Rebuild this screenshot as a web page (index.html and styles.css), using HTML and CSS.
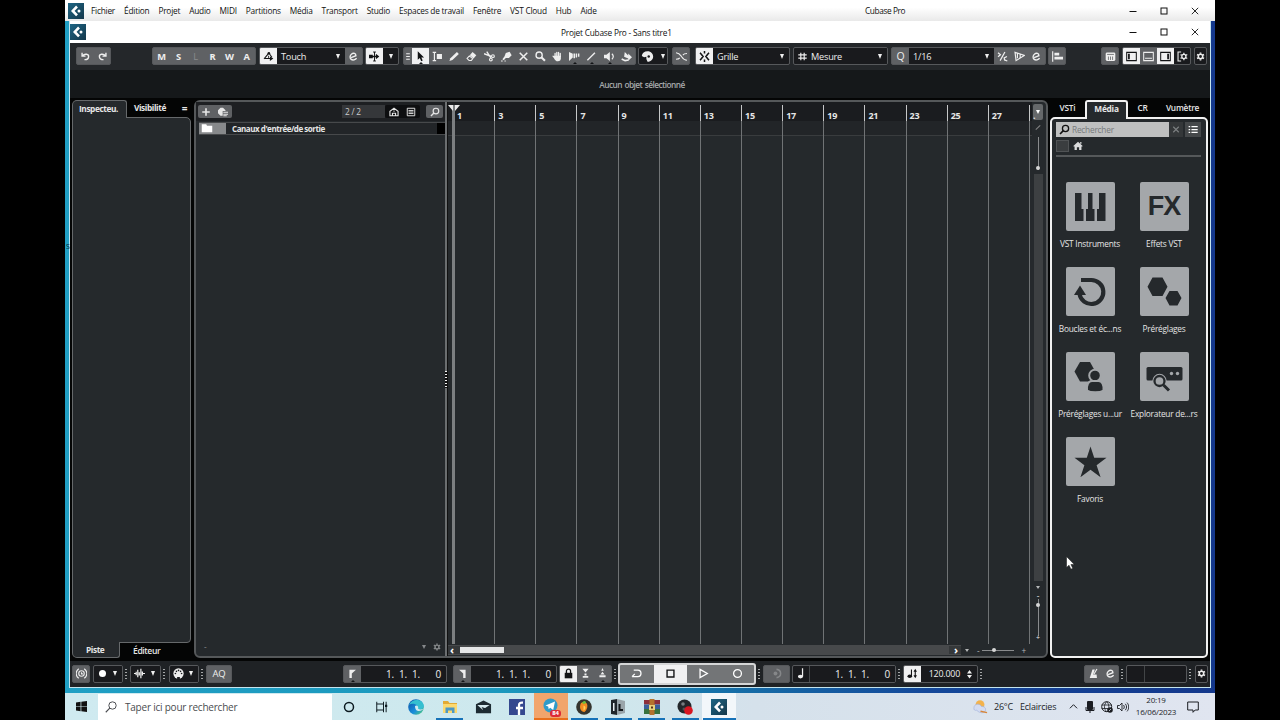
FILE: index.html
```html
<!DOCTYPE html>
<html lang="fr">

<head>
    <meta charset="UTF-8">
    <title>Cubase Pro</title>
    <link rel="stylesheet" href="styles.css">
</head>

<body>

    <!-- Icons -->
    <svg class="sprite" xmlns="http://www.w3.org/2000/svg">
        <defs>
            <linearGradient id="cube-bg" x1="0" y1="0" x2="1" y2="1">
                <stop offset="0" stop-color="#1d6584" />
                <stop offset="1" stop-color="#15384b" />
            </linearGradient>
            <linearGradient id="edge-bg" x1="0" y1="0" x2="1" y2="1">
                <stop offset="0" stop-color="#0b4fa5" />
                <stop offset=".6" stop-color="#1b8fdb" />
                <stop offset="1" stop-color="#5bd66b" />
            </linearGradient>
        </defs>
        <symbol id="i-cubase" viewBox="0 0 16 16">
            <rect width="16" height="16" fill="url(#cube-bg)" />
            <path d="M9 3.500 4.800 7.900 9 12.300" fill="none" stroke="#fff" stroke-width="2.600" />
            <circle cx="11" cy="8" r="1.500" fill="#fff" />
        </symbol>
        <symbol id="i-min" viewBox="0 0 10 10"><path d="M1.500 5.500h7" stroke="currentColor" stroke-width="1" /></symbol>
        <symbol id="i-max" viewBox="0 0 10 10"><rect x="2" y="2" width="6" height="6" fill="none" stroke="currentColor" /></symbol>
        <symbol id="i-close" viewBox="0 0 10 10"><path d="M1.800 1.800l6.400 6.400M8.200 1.800 1.800 8.200" stroke="currentColor" stroke-width=".9" /></symbol>
        <symbol id="i-undo" viewBox="0 0 16 16"><path d="M3 2.500v5h5M3.500 7.200C7 3 13 4.500 12.500 8.500 12.200 11.500 9.500 12.800 6.500 12.500" fill="none" stroke="currentColor" stroke-width="2" /></symbol>
        <symbol id="i-redo" viewBox="0 0 16 16"><path d="M13 2.500v5H8M12.500 7.200C9 3 3 4.500 3.500 8.500 3.800 11.500 6.500 12.800 9.500 12.500" fill="none" stroke="currentColor" stroke-width="2" /></symbol>
        <symbol id="i-auto" viewBox="0 0 16 16"><path d="M1.500 11.500 8.500 3M8.500 3l4.500 6M3 11h8" fill="none" stroke="currentColor" stroke-width="1.500" /><circle cx="8.500" cy="3.200" r="1.900" fill="currentColor" /><path d="M10 7.500l5 3.500-5 3.500z" fill="currentColor" /><path d="M8 7v3" stroke="currentColor" stroke-width="1.200" /></symbol>
        <symbol id="i-e" viewBox="0 0 16 16"><path d="M4.500 9.500 11.500 6.800C11.500 3.500 8 2.300 5.300 4.300 2.500 6.500 2.300 10.500 4.600 12.200 7 14 11 12.800 12.500 10.500" fill="none" stroke="currentColor" stroke-width="2" /></symbol>
        <symbol id="i-autoscroll" viewBox="0 0 16 16"><path d="M8 1.500v13M6 1.500h4M6 14.500h4" stroke="currentColor" stroke-width="1.400" /><path d="M0 5.500h5.500v5H0zM10 4l5 4-5 4z" fill="currentColor" /><path d="M3 8h9" stroke="currentColor" stroke-width="2" /></symbol>
        <symbol id="i-handle" viewBox="0 0 6 12"><path d="M1 3h4M1 6h4M1 9h4" stroke="currentColor" stroke-width="1.300" /></symbol>
        <symbol id="i-arrow" viewBox="0 0 16 16"><path d="M4 .5v12.300l3-2.700 2 4.700 2.200-1-2-4.500h4z" fill="currentColor" /></symbol>
        <symbol id="i-range" viewBox="0 0 16 16"><path d="M1 2h5M3.500 2v12M1 14h5" fill="none" stroke="currentColor" stroke-width="1.700" /><path d="M7 4.500h7.500v7H7z" fill="currentColor" /></symbol>
        <symbol id="i-pencil" viewBox="0 0 16 16"><path d="M.5 14.500l1.500-4L11.500 1.500l2.800 2.800-9.300 8.700z" fill="currentColor" /></symbol>
        <symbol id="i-eraser" viewBox="0 0 16 16"><path d="M9.500 1.500l5.500 4.500-4 4.800-5.500-4.500z" fill="currentColor" /><path d="M4.800 7.200l5 4-2 2.500H4.500L1.500 11z" fill="none" stroke="currentColor" stroke-width="1.500" /></symbol>
        <symbol id="i-cut" viewBox="0 0 16 16"><path d="M0 4l11 4M4 1l6 9" stroke="currentColor" stroke-width="2" /><circle cx="13" cy="7.500" r="2" fill="none" stroke="currentColor" stroke-width="1.700" /><circle cx="10" cy="12.500" r="2" fill="none" stroke="currentColor" stroke-width="1.700" /></symbol>
        <symbol id="i-glue" viewBox="0 0 16 16"><path d="M7 3l5.500-2L15.500 6 11.500 10H7l-3 3.500-2-1.500L5 8z" fill="currentColor" /><path d="M0 14.500h2.500M5 14.500h2" stroke="currentColor" stroke-width="1.500" /></symbol>
        <symbol id="i-x" viewBox="0 0 16 16"><path d="M2.500 2.500l11 11M13.500 2.500l-11 11" stroke="currentColor" stroke-width="2.200" /></symbol>
        <symbol id="i-zoom" viewBox="0 0 16 16"><circle cx="6" cy="6" r="4.500" fill="none" stroke="currentColor" stroke-width="2" /><path d="M9.200 9l5.300 5.300" stroke="currentColor" stroke-width="3" /></symbol>
        <symbol id="i-hand" viewBox="0 0 16 16"><path d="M4.500 8V3.500M7 7.500V2M9.500 7.500V2M12 8V3.500M3.500 9.500 1.500 7.500" stroke="currentColor" stroke-width="1.900" stroke-linecap="round" /><path d="M3.500 7h9.400v3.500c0 2.500-1.500 4.500-4.400 4.500-2.500 0-4-1.500-6-5.300z" fill="currentColor" /></symbol>
        <symbol id="i-comp" viewBox="0 0 16 16"><path d="M0 1.500l5.500 2.500v5.500l-5.500 5zM6.500 3.500h2.200v7H6.500zM9.700 3.500h2v6h-2zM12.900 3.500h2.200v5h-2.200z" fill="currentColor" /></symbol>
        <symbol id="i-line" viewBox="0 0 16 16"><path d="M2 13.500 13 2.500" stroke="currentColor" stroke-width="2" /></symbol>
        <symbol id="i-speaker" viewBox="0 0 16 16"><path d="M0 5.500h3.500L8.500 1.500v13l-5-4H0z" fill="currentColor" /><path d="M11.500 4c2.500 2.500 2.500 5.500 0 8" fill="none" stroke="currentColor" stroke-width="1.700" /></symbol>
        <symbol id="i-colour" viewBox="0 0 16 16"><path d="M5.500 1.500l5 5V3.500L16 9l-5.500 5v-3L4.500 8.500z" fill="currentColor" /><path d="M1 11.500l5 2.500 5-1" fill="none" stroke="currentColor" stroke-width="2.400" /></symbol>
        <symbol id="i-palette" viewBox="0 0 16 16"><path d="M8 1.500A7 6.500 0 0 0 1 7.500l2.800 1.500 2.800-.8v3L8 14.500C17.500 14 17 1.500 8 1.500z" fill="currentColor" /><circle cx="9.500" cy="8" r="1.500" fill="#191a1d" /></symbol>
        <symbol id="i-fade" viewBox="0 0 16 16"><path d="M0 2.500C5 3 6 5 8 8s3.500 5.500 8 5.500M10 6c1-1.500 2-2.200 6-2.300M0 12c3 0 4.500-.5 5.500-2" fill="none" stroke="currentColor" stroke-width="1.600" /></symbol>
        <symbol id="i-snap" viewBox="0 0 16 16"><path d="M8 0v3.500M8 12.500V16M1.500 2.500 6 8l-4.500 5.500M14.500 2.500 10 8l4.500 5.500" fill="none" stroke="currentColor" stroke-width="2.200" /></symbol>
        <symbol id="i-hash" viewBox="0 0 16 16"><path d="M5 1.500v13M11 1.500v13M.5 5h15M.5 11h15" stroke="currentColor" stroke-width="2.100" /></symbol>
        <symbol id="i-iq" viewBox="0 0 16 16"><path d="M1.500 2.500l3.500 3L1.500 8.500M4.500 14l7-12.500M14.500 8l-4 2 .5 3 4 1.500" fill="none" stroke="currentColor" stroke-width="1.800" /></symbol>
        <symbol id="i-swing" viewBox="0 0 16 16"><path d="M1.500 2l13.500 4.500L3 14zM5 3.500v7M9 5v5" fill="none" stroke="currentColor" stroke-width="1.700" /></symbol>
        <symbol id="i-align" viewBox="0 0 16 16"><path d="M1 .5v15" stroke="currentColor" stroke-width="1.700" /><path d="M3.500 2.500h7v4h-7zM3.500 8.500H16V12.500H3.500z" fill="currentColor" /></symbol>
        <symbol id="i-keys" viewBox="0 0 16 16"><rect x="1" y="2" width="14" height="12.500" rx="2" fill="currentColor" /><path d="M3 5h10M5 8v5M8 8v5M11 8v5" stroke="#66686b" stroke-width="1.200" /></symbol>
        <symbol id="i-zone-l" viewBox="0 0 16 16"><path d="M1 2h14v12H1z" fill="none" stroke="currentColor" stroke-width="1.500" /><path d="M3 4h2.500v8H3z" fill="currentColor" /></symbol>
        <symbol id="i-zone-b" viewBox="0 0 16 16"><path d="M1 2h14v12H1zM3 10.500h10" fill="none" stroke="currentColor" stroke-width="1.500" /></symbol>
        <symbol id="i-zone-r" viewBox="0 0 16 16"><path d="M1 2h14v12H1z" fill="none" stroke="currentColor" stroke-width="1.500" /><path d="M10.500 4H13v8h-2.500z" fill="currentColor" /></symbol>
        <symbol id="i-gear" viewBox="0 0 16 16"><circle cx="8" cy="8" r="3.900" fill="none" stroke="currentColor" stroke-width="2.700" /><path d="M8 .8v2.500M8 12.700v2.500M1.800 4.400l2 1.200M12.200 10.400l2 1.200M1.800 11.600l2-1.200M12.200 5.600l2-1.200" stroke="currentColor" stroke-width="2.900" /></symbol>
        <symbol id="i-setup" viewBox="0 0 16 16"><path d="M6 1.500H1.500v13H6" fill="none" stroke="currentColor" stroke-width="1.600" /><circle cx="10" cy="8" r="3" fill="none" stroke="currentColor" stroke-width="1.900" /><path d="M10 2.500v2M10 11.500v2M5.200 5.300l1.700 1M13.200 9.800l1.700 1M5.200 10.700l1.700-1M13.200 6.200l1.700-1" stroke="currentColor" stroke-width="1.800" /></symbol>
        <symbol id="i-plus" viewBox="0 0 16 16"><path d="M8 2v12M2 8h12" stroke="currentColor" stroke-width="2.600" /></symbol>
        <symbol id="i-preset" viewBox="0 0 16 16"><path d="M0 10V5l4-4h4l4 4v1.500H7.500V14H4z" fill="currentColor" /><path d="M8.500 8.500H16M8.500 11.500H16M8.500 14H14" stroke="currentColor" stroke-width="1.700" /></symbol>
        <symbol id="i-house" viewBox="0 0 16 16"><path d="M1.500 14V7L8 2l6.500 5v7zM5.500 14v-4h5v4M8 5.500v2" fill="none" stroke="currentColor" stroke-width="1.800" /></symbol>
        <symbol id="i-rows" viewBox="0 0 16 16"><path d="M2 2h12v12H2zM4 5.500h8M4 8h8M4 10.500h8" fill="none" stroke="currentColor" stroke-width="1.500" /></symbol>
        <symbol id="i-find" viewBox="0 0 16 16"><circle cx="9.500" cy="6.500" r="4.500" fill="none" stroke="currentColor" stroke-width="1.900" /><path d="M6.300 9.700 1.500 14.500" stroke="currentColor" stroke-width="2.400" /></symbol>
        <symbol id="i-wfind" viewBox="0 0 16 16"><circle cx="10" cy="6" r="4.900" fill="none" stroke="currentColor" stroke-width="1.300" /><path d="M6.700 9.300 1 15" stroke="currentColor" stroke-width="1.500" /></symbol>
        <symbol id="i-folder" viewBox="0 0 16 12"><path d="M1 1h6l1 2h7v8.500H1z" fill="currentColor" /></symbol>
        <symbol id="i-home" viewBox="0 0 16 16"><path d="M8 1l7.500 7-1.200 1.200L13.500 8.500V14.500H9.800V10H6.200v4.500H2.500V8.500L1.700 9.200.5 8zM11.500 1.500h2v3h-2z" fill="currentColor" /></symbol>
        <symbol id="i-list" viewBox="0 0 16 16"><path d="M1 3.500h2.500M1 8h2.500M1 12.500h2.500M5.500 3.500H15.500M5.500 8H15.500M5.500 12.500H15.500" stroke="currentColor" stroke-width="2" /></symbol>
        <symbol id="i-connect" viewBox="0 0 16 16"><circle cx="8" cy="8" r="4" fill="none" stroke="currentColor" stroke-width="1.600" /><path d="M8 6v2.500h2M4 1C-1 4.500-1 11.500 4 15M12 1c5 3.500 5 10.500 0 14" fill="none" stroke="currentColor" stroke-width="1.600" /></symbol>
        <symbol id="i-wave" viewBox="0 0 16 16"><path d="M0 8h2.500M3.200 5.500v5M5.500 2.500v11M7.700 6v5M10 1v14M12.200 5v6M13 8h3" stroke="currentColor" stroke-width="1.800" /></symbol>
        <symbol id="i-midi" viewBox="0 0 16 16"><circle cx="8" cy="8" r="7.500" fill="currentColor" /><g fill="#191a1d"><circle cx="3.500" cy="8" r="1.200" /><circle cx="5" cy="4.800" r="1.200" /><circle cx="8" cy="3.500" r="1.200" /><circle cx="11" cy="4.800" r="1.200" /><circle cx="12.500" cy="8" r="1.200" /><path d="M6 13h4v3H6z" /></g></symbol>
        <symbol id="i-loc-l" viewBox="0 0 16 16"><path d="M3.500 2.500h9.500L7 8v6.500H3.500z" fill="currentColor" /></symbol>
        <symbol id="i-loc-r" viewBox="0 0 16 16"><path d="M12.500 2.500H3L9 8v6.500h3.500z" fill="currentColor" /></symbol>
        <symbol id="i-lock" viewBox="0 0 16 16"><rect x="2.500" y="7" width="11" height="8" fill="currentColor" /><path d="M5 8V4.500a3 3 0 0 1 6 0V8" fill="none" stroke="currentColor" stroke-width="1.900" /></symbol>
        <symbol id="i-punch-in" viewBox="0 0 16 16"><path d="M3.500 1h9L8 6.500zM6.500 8h3v3h-3zM4 11.500h8v2.500H4z" fill="currentColor" /></symbol>
        <symbol id="i-punch-out" viewBox="0 0 16 16"><path d="M8 0l1.800 4H6.200zM8 5.500l3 4H5zM3.500 10.500h9v3h-9z" fill="currentColor" /></symbol>
        <symbol id="i-cycle" viewBox="0 0 16 16"><path d="M4 3h6c6 0 6 9.500 0 9.500H1.500M5.500 8.500 1.500 12.500" fill="none" stroke="currentColor" stroke-width="1.900" /></symbol>
        <symbol id="i-stop" viewBox="0 0 16 16"><path d="M3 3h10v10H3z" fill="none" stroke="currentColor" stroke-width="2" /></symbol>
        <symbol id="i-play" viewBox="0 0 16 16"><path d="M3 2 13.500 8 3 14z" fill="none" stroke="currentColor" stroke-width="1.900" /></symbol>
        <symbol id="i-rec" viewBox="0 0 16 16"><circle cx="8" cy="8" r="5.700" fill="none" stroke="currentColor" stroke-width="1.900" /></symbol>
        <symbol id="i-pre" viewBox="0 0 16 16"><circle cx="6.500" cy="8" r="2.800" fill="currentColor" /><path d="M8 2c8 1 8 11 0 12" fill="none" stroke="currentColor" stroke-width="2.200" /></symbol>
        <symbol id="i-note" viewBox="0 0 16 16"><ellipse cx="6.500" cy="12.500" rx="3.800" ry="2.600" fill="currentColor" /><path d="M9.500 12.500V.5" stroke="currentColor" stroke-width="1.800" /></symbol>
        <symbol id="i-tempo" viewBox="0 0 16 16"><ellipse cx="4" cy="12" rx="3.300" ry="2.500" fill="currentColor" /><path d="M6.500 12V2M12 3v10" stroke="currentColor" stroke-width="1.600" /><path d="M9.500 5.500l2.500-4.500 2.500 4.500zM9.500 10.500l2.500 4.500 2.500-4.500z" fill="currentColor" /></symbol>
        <symbol id="i-metro" viewBox="0 0 16 16"><path d="M6.500 2h3.500L7.500 9.500h5l.5 5H2.500z" fill="currentColor" /><path d="M8.500 9l4.500-7.500" stroke="currentColor" stroke-width="1.700" /></symbol>
        <symbol id="i-spin" viewBox="0 0 8 16"><path d="M0 7l4-5.500L8 7zM0 9.500h8L4 15z" fill="currentColor" /></symbol>

        <!-- Media rack tiles -->
        <symbol id="t-inst" viewBox="0 0 48 48"><path d="M9 10h6.500v16h2v12H9zM22 10h4.500v16H28.500v12h-8.500V26h2zM33 10h6.500v28H31V26h2z" fill="currentColor" /></symbol>
        <symbol id="t-loop" viewBox="0 0 48 48"><path d="M15 12h10a12 12 0 1 1-11.500 14" fill="none" stroke="currentColor" stroke-width="4.200" /><path d="M8 27 14 17.500l6 9.500z" fill="currentColor" /></symbol>
        <symbol id="t-preset" viewBox="0 0 48 48"><path d="M12.500 9.500h10l5 9.200-5 9.300h-10l-5-9.300zM29.500 23h8l4 7-4 7.500h-8l-4-7.500z" fill="currentColor" /></symbol>
        <symbol id="t-user" viewBox="0 0 48 48"><path d="M14 9h10l5 9-5 10.500H14L8.500 18.500z" fill="currentColor" /><g fill="currentColor" stroke="#a4a7aa" stroke-width="2"><circle cx="29" cy="22.500" r="5.800" /><path d="M21 37.500c-.5-6 1.500-9.500 5-9.500h6.500c3.500 0 5.500 3.500 5 9.500-3.500 2.300-13 2.300-16.500 0z" /></g></symbol>
        <symbol id="t-explore" viewBox="0 0 48 48"><rect x="6.500" y="14" width="36" height="13.500" rx="1.500" fill="currentColor" /><circle cx="31.500" cy="20.500" r="1.700" fill="#a4a7aa" /><circle cx="37.500" cy="20.500" r="1.700" fill="#a4a7aa" /><circle cx="19.500" cy="28" r="7.200" fill="#a4a7aa" /><circle cx="19.500" cy="28" r="5" fill="none" stroke="currentColor" stroke-width="2.300" /><path d="M23.500 32l5.500 5.500" stroke="currentColor" stroke-width="3" /></symbol>
        <symbol id="t-star" viewBox="0 0 48 48"><path d="M24.500 8.500l3.700 11.200H40.500l-9.900 7.500 4 12-10.100-7.400-10.100 7.400 4-12-9.900-7.500h12.300z" fill="currentColor" /></symbol>

        <!-- Windows taskbar -->
        <symbol id="w-start" viewBox="0 0 12 12"><path d="M0 1.600 5 .9v4.700H0zM5.800.8 12 0v5.600H5.800zM0 6.400h5v4.700l-5-.7zM5.800 6.400H12V12l-6.200-.9z" fill="#111" /></symbol>
        <symbol id="w-cortana" viewBox="0 0 16 16"><circle cx="8" cy="8" r="6" fill="none" stroke="#0c1a20" stroke-width="2" /></symbol>
        <symbol id="w-tasks" viewBox="0 0 16 16"><path d="M1 1v3h9V1M1 15v-3h9v3M1 4v8M10 4v8M13.500 1v14" fill="none" stroke="#0c1a20" stroke-width="1.300" /><path d="M12 5h3v3h-3z" fill="#0c1a20" /></symbol>
        <symbol id="w-edge" viewBox="0 0 16 16"><circle cx="8" cy="8" r="7.800" fill="url(#edge-bg)" /><path d="M1 6C4-1 15-.5 15.800 7c0 3-4 4-6 2.500C11 6 5 3 1 6z" fill="#35bfd0" /><path d="M7 7c2-1.500 4 .5 3 2.500 1.500 1.500 4 1.300 5.500 0C14 12.500 7 14 7 7z" fill="#d2eaf0" /></symbol>
        <symbol id="w-files" viewBox="0 0 16 16"><path d="M1 2h5l1.500 2H15v3H1z" fill="#e2aa34" /><path d="M1 5h14v9H1z" fill="#fbd970" /><path d="M3.500 8.500h9V14H10v-2.500H6V14H3.500z" fill="#4b98c5" /></symbol>
        <symbol id="w-mail" viewBox="0 0 18 16"><path d="M1 5l8-4 8 4v9.500H1z" fill="#1d2b32" /><path d="M2.500 6h13L8 11z" fill="#d5e9ee" /><path d="M7 8l2 4 3-2.500" fill="#1d2b32" /></symbol>
        <symbol id="w-fb" viewBox="0 0 16 16"><rect width="16" height="16" fill="#34488f" /><path d="M10 16V6.500C10 4 11 3.500 14 3.700M7 9h7" fill="none" stroke="#fff" stroke-width="2.300" /></symbol>
        <symbol id="w-tg" viewBox="0 0 16 16"><circle cx="7.500" cy="7.500" r="7" fill="#2f9bc9" /><path d="M2.500 7.500 12 3.500l-1.800 8.500-3-2.200-1.500 1.500-.5-2.800z" fill="#fff" /></symbol>
        <symbol id="w-fl" viewBox="0 0 16 16"><circle cx="8" cy="8" r="7.800" fill="#35352f" /><path d="M5 4C11 0 14 8 8.500 13 4 12.500 3 8 5 4z" fill="#f38d22" /><path d="M6 4c2-3 4-2 4 0L8 5z" fill="#6abf3b" /><path d="M7.500 6.500c3 1 2 4 0 5z" fill="#ffd35b" /></symbol>
        <symbol id="w-live" viewBox="0 0 16 16"><path d="M1 1l6-1v16l-6-1z" fill="#20262a" /><path d="M3 4h1.500v8H3z" fill="#e8eef0" /><path d="M7 0l8 2v12l-8 2z" fill="#9aa5aa" /><path d="M9.500 5v6H13" fill="none" stroke="#121619" stroke-width="2" /></symbol>
        <symbol id="w-rar" viewBox="0 0 16 16"><path d="M0 1h16v4.500H0z" fill="#8d2f3b" /><path d="M0 5.500h16V10H0z" fill="#3a5f9a" /><path d="M0 10h16v5H0z" fill="#38733f" /><path d="M5.500 0h5v16h-5z" fill="#b5722d" /><path d="M5 6h6v5H5z" fill="#e8d27c" /><path d="M7 7.500h2v2H7z" fill="#5a3218" /></symbol>
        <symbol id="w-obs" viewBox="0 0 16 16"><circle cx="7.500" cy="7.500" r="7" fill="#23272b" /><circle cx="6" cy="5" r="1.800" fill="#777c80" /><circle cx="7" cy="10" r="1.500" fill="#4c5256" /><circle cx="11.500" cy="11.500" r="4.300" fill="#d81621" /></symbol>
        <symbol id="w-weather" viewBox="0 0 18 16"><circle cx="8.500" cy="6" r="4.700" fill="#f3b24c" /><path d="M2 9.500C2 5 8 4 10 8c5-.5 6 5 2 6.500-3 .5-5-.5-7-2.500C3 12.500 1.500 11.500 2 9.500z" fill="#d3dcf2" stroke="#a3b3dc" stroke-width=".7" /><path d="M9 13l7 1.500" stroke="#d78638" stroke-width="1.500" /></symbol>
        <symbol id="w-up" viewBox="0 0 10 10"><path d="M1 7l4-4 4 4" fill="none" stroke="#1b1d22" stroke-width="1.100" /></symbol>
        <symbol id="w-mic" viewBox="0 0 10 12"><rect x="2" y="0" width="6" height="9" rx="1" fill="#1b1d22" /><path d="M1 6v3.500h8V6M5 9v3" fill="none" stroke="#1b1d22" /></symbol>
        <symbol id="w-globe" viewBox="0 0 12 12"><circle cx="5.700" cy="5.700" r="5" fill="none" stroke="#1b1d22" /><path d="M.7 4h10M.7 7.500h7M5.700.7c-3 3-3 7 0 10M5.700.7c2 2 2.400 4 2 6" fill="none" stroke="#1b1d22" stroke-width=".8" /><circle cx="9" cy="9" r="2.800" fill="#1b1d22" /><path d="M8 10l2-2" stroke="#dce2ec" stroke-width=".8" /></symbol>
        <symbol id="w-vol" viewBox="0 0 12 12"><path d="M.5 4.500h2l2.500-2.500v8L2.500 7.500h-2zM6.500 4c1 1.300 1 2.700 0 4M8.300 2.800c1.700 2 1.700 4.400 0 6.400M10 1.600c2.300 2.600 2.300 6.200 0 8.800" fill="none" stroke="#1b1d22" stroke-width=".9" /></symbol>
        <symbol id="w-note" viewBox="0 0 12 12"><path d="M.7 1h10.600v8H8.200L6 11.300V9H.7z" fill="none" stroke="#1b1d22" /></symbol>
    </svg>

    <div class="desktop">

        <header class="app-bar">
            <svg class="logo"><use href="#i-cubase" /></svg>
            <nav class="menu">
                <span>Fichier</span><span>Édition</span><span>Projet</span><span>Audio</span><span>MIDI</span><span>Partitions</span><span>Média</span><span>Transport</span><span>Studio</span><span>Espaces de travail</span><span>Fenêtre</span><span>VST Cloud</span><span>Hub</span><span>Aide</span>
            </nav>
            <span class="app-name">Cubase Pro</span>
            <div class="win-btns"><svg><use href="#i-min" /></svg><svg><use href="#i-max" /></svg><svg><use href="#i-close" /></svg></div>
        </header>

        <div class="edge-letter">S</div>

        <main class="window">
            <div class="title-bar">
                <svg class="logo"><use href="#i-cubase" /></svg>
                <span class="title">Projet Cubase Pro - Sans titre1</span>
                <div class="win-btns"><svg><use href="#i-min" /></svg><svg><use href="#i-max" /></svg><svg><use href="#i-close" /></svg></div>
            </div>

            <!-- Toolbar -->
            <div class="toolbar">
                <div class="group g-undo"><i><svg><use href="#i-undo" /></svg></i><i><svg><use href="#i-redo" /></svg></i></div>
                <div class="group g-states"><b>M</b><b>S</b><b class="off">L</b><b>R</b><b>W</b><b>A</b></div>
                <div class="group g-touch"><i class="on"><svg><use href="#i-auto" /></svg></i><span class="drop">Touch</span><i><svg><use href="#i-e" /></svg></i></div>
                <div class="group g-scroll"><i class="on"><svg><use href="#i-autoscroll" /></svg></i><span class="drop"></span></div>
                <div class="group g-tools">
                    <i class="handle"><svg><use href="#i-handle" /></svg></i>
                    <i class="on more"><svg><use href="#i-arrow" /></svg></i>
                    <i><svg><use href="#i-range" /></svg></i>
                    <i><svg><use href="#i-pencil" /></svg></i>
                    <i><svg><use href="#i-eraser" /></svg></i>
                    <i><svg><use href="#i-cut" /></svg></i>
                    <i><svg><use href="#i-glue" /></svg></i>
                    <i><svg><use href="#i-x" /></svg></i>
                    <i><svg><use href="#i-zoom" /></svg></i>
                    <i><svg><use href="#i-hand" /></svg></i>
                    <i class="more"><svg><use href="#i-comp" /></svg></i>
                    <i class="more"><svg><use href="#i-line" /></svg></i>
                    <i class="more"><svg><use href="#i-speaker" /></svg></i>
                    <i><svg><use href="#i-colour" /></svg></i>
                </div>
                <div class="group dark g-palette"><i><svg><use href="#i-palette" /></svg></i><span class="drop"></span></div>
                <div class="group g-fade"><i><svg><use href="#i-fade" /></svg></i></div>
                <div class="group g-snap"><i class="on"><svg><use href="#i-snap" /></svg></i><span class="drop">Grille</span></div>
                <div class="group dark g-grid"><i><svg><use href="#i-hash" /></svg></i><span class="drop">Mesure</span></div>
                <div class="group g-quant"><i class="letter">Q</i><span class="drop">1/16</span><i><svg><use href="#i-iq" /></svg></i><i><svg><use href="#i-swing" /></svg></i><i><svg><use href="#i-e" /></svg></i></div>
                <div class="group g-align"><i><svg><use href="#i-align" /></svg></i></div>
                <div class="group g-keys"><i><svg><use href="#i-keys" /></svg></i></div>
                <div class="group g-zones"><i class="on"><svg><use href="#i-zone-l" /></svg></i><i><svg><use href="#i-zone-b" /></svg></i><i class="on"><svg><use href="#i-zone-r" /></svg></i><i class="black"><svg><use href="#i-setup" /></svg></i></div>
                <div class="group dark g-gear"><i><svg><use href="#i-gear" /></svg></i></div>
            </div>

            <div class="info-line">Aucun objet sélectionné</div>

            <!-- Zones -->
            <div class="zones">
                <aside class="inspector">
                    <div class="tabs"><span class="tab active">Inspecteu.</span><span class="tab vis">Visibilité</span><span class="eq">=</span></div>
                    <div class="pane"></div>
                    <div class="tabs bottom"><span class="tab active">Piste</span><span class="tab editor">Éditeur</span></div>
                </aside>

                <section class="project">
                    <div class="track-list">
                        <div class="track-head">
                            <div class="add"><svg><use href="#i-plus" /></svg><svg><use href="#i-preset" /></svg></div>
                            <span class="count">2 / 2</span>
                            <div class="views"><svg><use href="#i-house" /></svg><svg><use href="#i-rows" /></svg></div>
                            <div class="find"><svg><use href="#i-find" /></svg></div>
                        </div>
                        <div class="track">
                            <span class="track-icon"><svg><use href="#i-folder" /></svg></span>
                            <span class="track-name">Canaux d'entrée/de sortie</span>
                            <span class="track-end"></span>
                        </div>
                        <div class="track-foot"><span class="dash">-</span><span class="tri"></span><svg><use href="#i-gear" /></svg></div>
                    </div>

                    <div class="splitter"><span></span></div>

                    <div class="timeline">
                        <div class="bars">
                            <div class="bar first"><span>1</span></div>
                            <div class="bar"><span>3</span></div>
                            <div class="bar"><span>5</span></div>
                            <div class="bar"><span>7</span></div>
                            <div class="bar"><span>9</span></div>
                            <div class="bar"><span>11</span></div>
                            <div class="bar"><span>13</span></div>
                            <div class="bar"><span>15</span></div>
                            <div class="bar"><span>17</span></div>
                            <div class="bar"><span>19</span></div>
                            <div class="bar"><span>21</span></div>
                            <div class="bar"><span>23</span></div>
                            <div class="bar"><span>25</span></div>
                            <div class="bar"><span>27</span></div>
                            <div class="bar last"><span>.</span></div>
                        </div>
                        <div class="h-scroll">
                            <div class="h-track"><span class="chev">‹</span><span class="thumb"></span><span class="chev end">›</span></div>
                            <span class="tri"></span>
                            <span class="sign">-</span>
                            <div class="h-zoom"><span></span></div>
                            <span class="sign">+</span>
                        </div>
                        <svg class="cursor-head" viewBox="0 0 12 7"><path d="M0 0h5v6zM12 0H7v6z" fill="#e9e9e9" /></svg>
                    </div>

                    <div class="v-col">
                        <span class="v-menu"></span>
                        <span class="slash"></span>
                        <div class="v-zoom top"><span></span></div>
                        <div class="v-scroll"></div>
                        <span class="tri"></span>
                        <span class="v-sign">-</span>
                        <div class="v-zoom low"><span></span></div>
                        <span class="v-sign plus">+</span>
                    </div>
                </section>

                <aside class="rack">
                    <div class="rack-tabs"><span>VSTi</span><span class="active">Média</span><span>CR</span><span>Vumètre</span></div>
                    <div class="rack-pane">
                        <div class="search">
                            <div class="field"><svg><use href="#i-find" /></svg>Rechercher</div>
                            <span class="clear"><svg><use href="#i-x" /></svg></span>
                            <span class="as-list"><svg><use href="#i-list" /></svg></span>
                        </div>
                        <div class="path"><span class="back"></span><svg><use href="#i-home" /></svg></div>
                        <div class="tiles">
                            <div class="tile"><span><svg><use href="#t-inst" /></svg></span>VST Instruments</div>
                            <div class="tile"><span class="fx">FX</span>Effets VST</div>
                            <div class="tile"><span><svg><use href="#t-loop" /></svg></span>Boucles et éc...ns</div>
                            <div class="tile"><span><svg><use href="#t-preset" /></svg></span>Préréglages</div>
                            <div class="tile"><span><svg><use href="#t-user" /></svg></span>Préréglages u...ur</div>
                            <div class="tile"><span><svg><use href="#t-explore" /></svg></span>Explorateur de...rs</div>
                            <div class="tile"><span><svg><use href="#t-star" /></svg></span>Favoris</div>
                        </div>
                    </div>
                </aside>
            </div>

            <!-- Transport -->
            <div class="transport">
                <div class="group t-connect"><i><svg><use href="#i-connect" /></svg></i></div>
                <div class="group dark t-rec"><i class="dot"></i><span class="drop"></span></div><em></em>
                <div class="group dark t-wave"><i><svg><use href="#i-wave" /></svg></i><span class="drop"></span></div><em></em>
                <div class="group dark t-midi"><i><svg><use href="#i-midi" /></svg></i><span class="drop"></span></div><em></em>
                <div class="group t-aq">AQ</div>
                <div class="group t-left"><i class="more"><svg><use href="#i-loc-l" /></svg></i><span class="pos">1. 1. 1. &nbsp; 0</span></div>
                <div class="group t-right"><i class="more"><svg><use href="#i-loc-r" /></svg></i><span class="pos">1. 1. 1. &nbsp; 0</span></div>
                <div class="group t-lock"><i class="on"><svg><use href="#i-lock" /></svg></i><i class="more"><svg><use href="#i-punch-in" /></svg></i><i class="more"><svg><use href="#i-punch-out" /></svg></i></div><em></em>
                <div class="buttons"><i><svg><use href="#i-cycle" /></svg></i><i class="on"><svg><use href="#i-stop" /></svg></i><i><svg><use href="#i-play" /></svg></i><i><svg><use href="#i-rec" /></svg></i></div><em></em>
                <div class="group t-pre"><i><svg><use href="#i-pre" /></svg></i></div>
                <div class="group dark t-time"><i><svg><use href="#i-note" /></svg></i><span class="pos">1. 1. 1. &nbsp; 0</span></div><em></em>
                <div class="group t-tempo"><i class="on"><svg><use href="#i-tempo" /></svg></i><span class="pos">120.000</span><svg class="spin"><use href="#i-spin" /></svg></div><em></em>
                <div class="group t-click"><i><svg><use href="#i-metro" /></svg></i><i><svg><use href="#i-e" /></svg></i></div><em></em>
                <div class="group dark t-meter"><span></span></div><em></em>
                <div class="group dark t-gear"><i><svg><use href="#i-gear" /></svg></i></div>
            </div>
        </main>

        <svg class="pointer" viewBox="0 0 9 14"><path d="M.5.5v11l2.500-2.300 2 4 1.800-.9-1.900-3.800h3.400z" fill="#fff" stroke="#111" stroke-width=".5" /></svg>

        <footer class="taskbar">
            <span class="start"><svg><use href="#w-start" /></svg></span>
            <div class="task-search"><svg><use href="#i-wfind" /></svg>Taper ici pour rechercher</div>
            <div class="apps">
                <span><svg class="small"><use href="#w-cortana" /></svg></span>
                <span><svg class="small"><use href="#w-tasks" /></svg></span>
                <span><svg><use href="#w-edge" /></svg></span>
                <span class="run"><svg><use href="#w-files" /></svg></span>
                <span><svg class="wide"><use href="#w-mail" /></svg></span>
                <span><svg><use href="#w-fb" /></svg></span>
                <span class="alert"><svg><use href="#w-tg" /></svg><b>84</b></span>
                <span class="run"><svg><use href="#w-fl" /></svg></span>
                <span class="run"><svg><use href="#w-live" /></svg></span>
                <span class="run"><svg><use href="#w-rar" /></svg></span>
                <span class="run"><svg><use href="#w-obs" /></svg></span>
                <span class="run current"><svg><use href="#i-cubase" /></svg></span>
            </div>
            <div class="tray">
                <svg class="weather"><use href="#w-weather" /></svg>
                <span class="temp">26°C</span><span class="sky">Eclaircies</span>
                <svg class="up"><use href="#w-up" /></svg>
                <svg class="mic"><use href="#w-mic" /></svg>
                <svg class="net"><use href="#w-globe" /></svg>
                <svg class="vol"><use href="#w-vol" /></svg>
                <div class="clock">20:19<br>16/06/2023</div>
                <svg class="notif"><use href="#w-note" /></svg>
            </div>
        </footer>
    </div>

</body>

</html>
```

FILE: styles.css
```css
* {
    box-sizing: border-box;
}

body {
    margin: 0;
    width: 1280px;
    height: 720px;
    overflow: hidden;
    background: #000;
    font-family: "Open Sans", "Noto Sans", sans-serif;
    font-size: 8.3px;
    letter-spacing: -.22px;
    color: #e6e6e6;
    white-space: nowrap;
}

svg {
    display: block;
    flex: none;
}

i,
em {
    font-style: normal;
}

.sprite {
    position: absolute;
    width: 0;
    height: 0;
}

/* Desktop */
.desktop {
    position: relative;
    display: flex;
    flex-direction: column;
    width: 1150px;
    height: 720px;
    margin-left: 65px;
    background: linear-gradient(90deg, #209fc4 0, #1b98bd 38%, #1673a9 56%, #14489a 75%, #14388c 100%);
}

.app-bar,
.title-bar {
    display: flex;
    align-items: center;
    flex: none;
    height: 21px;
    background: #fff;
    color: #111;
}

.app-bar {
    padding-left: 3px;
    background: linear-gradient(#fff 35%, #e9e9e9);
}

.logo {
    width: 16px;
    height: 16px;
}

.menu {
    display: flex;
    gap: 9px;
    width: 774px;
    padding-left: 7px;
}

.app-name {
    width: 258px;
    padding-left: 7px;
    letter-spacing: -.5px;
}

.app-name {
    letter-spacing: -.4px;
}

.win-btns {
    display: flex;
    gap: 21px;
    margin-left: auto;
    padding-right: 15px;
}

.win-btns svg {
    width: 10px;
    height: 10px;
}

.edge-letter {
    position: absolute;
    left: 1px;
    top: 242px;
    width: 4px;
    overflow: hidden;
    font-size: 7px;
    color: #06202b;
}

/* Main window */
.window {
    display: flex;
    flex-direction: column;
    width: 1142px;
    height: 667px;
    margin-left: 4px;
    border: solid #c4e4ee;
    border-width: 0 1px 1px;
    background: #040505;
}

.title-bar {
    height: 22px;
}

.title-bar .title {
    width: 1080px;
    padding-left: 475px;
}

.title-bar .win-btns {
    padding-right: 10px;
}

.toolbar,
.transport {
    display: flex;
    align-items: center;
    flex: none;
    background: #24272a;
}

.toolbar {
    height: 27px;
    padding: 0 0 1px 6px;
}

.group {
    display: flex;
    flex: none;
    height: 18px;
    overflow: hidden;
    border: 1px solid #56585b;
    border-radius: 2px;
    background: #5f6164;
    color: #eee;
}

.group.dark,
.group .drop,
.group .pos,
.group .black {
    background: #191a1d;
}

.group i {
    position: relative;
    display: flex;
    align-items: center;
    justify-content: center;
    flex: none;
    width: 17px;
}

.group i svg {
    width: 11px;
    height: 11px;
}

.group .on,
.buttons .on {
    background: #f0f0f1;
    color: #121315;
}

.group .drop {
    display: flex;
    align-items: center;
    justify-content: space-between;
    flex: 1;
    padding: 0 5px 0 4px;
    font-size: 9.200px;
}

.drop::after,
.tri {
    content: "";
    margin-left: auto;
    border: 2.500px solid transparent;
    border-top: 5px solid #eee;
    border-bottom: 0;
}

.more::after {
    content: "";
    position: absolute;
    bottom: -1px;
    left: 6px;
    border: 3px solid transparent;
    border-bottom: 3px solid #131416;
    border-top: 0;
}

.g-undo {
    width: 35px;
}

.g-states {
    width: 104px;
    margin-left: 41px;
    font-size: 9.300px;
    align-items: center;
}

.g-states b {
    flex: 1;
    text-align: center;
}

.g-states .off {
    color: #8a8c8e;
    font-weight: 400;
}

.g-touch {
    width: 104px;
    margin-left: 3px;
}

.g-scroll {
    width: 34px;
    margin-left: 2px;
}

.g-scroll .drop,
.g-palette .drop {
    padding: 0 5px;
}

.g-tools {
    width: 233px;
    margin-left: 4px;
}

.g-tools i {
    width: 17.150px;
}

.g-tools .handle {
    width: 8px;
}

.g-tools .handle svg {
    width: 6px;
}

.g-palette {
    width: 30px;
    margin-left: 2px;
}

.g-palette i svg {
    width: 13px;
    height: 13px;
}

.g-fade {
    width: 18px;
    margin-left: 4px;
}

.g-snap {
    width: 95px;
    margin-left: 5px;
}

.g-grid {
    width: 95px;
    margin-left: 3px;
}

.g-grid .drop {
    padding-left: 0;
}

.g-grid i svg {
    width: 9px;
}

.g-quant {
    width: 155px;
    margin-left: 3px;
}

.g-quant .letter {
    font-size: 10.500px;
}

.g-align {
    width: 18px;
    margin-left: 2px;
}

.g-keys {
    width: 18px;
    margin-left: 35px;
}

.g-zones {
    width: 69px;
    margin-left: 3px;
}

.g-gear {
    width: 13px;
    margin-left: 3px;
}

.group.g-gear i,
.group.t-gear i {
    width: 11px;
}

.group.g-gear svg,
.group.t-gear svg {
    width: 9px;
    height: 9px;
}

.info-line {
    flex: none;
    height: 28px;
    margin-bottom: 2px;
    padding-left: 4px;
    background: #15181a;
    line-height: 29px;
    text-align: center;
    font-weight: 600;
    letter-spacing: -.55px;
    word-spacing: .8px;
    color: #a6a9ab;
}

/* Zones */
.zones {
    display: flex;
    flex: none;
    height: 558px;
    padding-left: 2px;
}

.inspector {
    display: flex;
    flex-direction: column;
    width: 119px;
    margin-right: 3px;
}

.inspector .tabs {
    display: flex;
    flex: none;
    height: 17px;
    font-weight: 700;
    line-height: 16px;
    letter-spacing: -.4px;
}

.tabs .active {
    position: relative;
    width: 55px;
    margin-bottom: -1px;
    padding-left: 6px;
    border: 1px solid #66696b;
    border-bottom: 0;
    border-radius: 5px 3px 0 0;
    background: #25292c;
}

.tabs .vis {
    padding-left: 7px;
}

.tabs .eq {
    margin: 0 4px 0 auto;
    font-size: 10px;
}

.inspector .pane {
    flex: 1;
    border: 1px solid #66696b;
    border-radius: 0 5px 4px 0;
    background: #25292c;
}

.inspector .bottom {
    height: 15px;
    line-height: 16px;
}

.bottom .active {
    width: 48px;
    margin: -1px 0 0;
    padding-left: 13px;
    border: 1px solid #66696b;
    border-top: 0;
    border-radius: 0 0 3px 5px;
}

.bottom .editor {
    padding-left: 13px;
    font-size: 8.600px;
    font-weight: 600;
}

.project {
    display: flex;
    width: 854px;
    border: 2px solid #55585a;
    border-radius: 6px;
    background: #25292c;
}

.track-list {
    display: flex;
    flex-direction: column;
    width: 249px;
}

.track-head {
    display: flex;
    align-items: center;
    height: 19px;
    padding: 2px 2px 2px 2px;
    background: #1d1f22;
}

.add,
.find,
.views {
    display: flex;
    align-items: center;
    justify-content: space-around;
    width: 34px;
    height: 13px;
    border-radius: 2px;
    background: #5f6164;
}

.add svg,
.views svg,
.find svg {
    width: 10px;
    height: 10px;
}

.add {
    padding-right: 1px;
}

.count {
    width: 43px;
    height: 13px;
    margin-left: 110px;
    padding-left: 3px;
    background: #35373a;
    line-height: 13px;
    color: #ccc;
}

.views {
    width: 35px;
    background: #0d0e10;
}

.find {
    width: 17px;
    margin-left: auto;
}

.track {
    display: flex;
    align-items: center;
    height: 13px;
    margin: 1px 0 0 3px;
    border: solid #47494b;
    border-width: 1px 0;
    background: #222528;
    font-weight: 700;
}

.track-icon {
    width: 27px;
    height: 11px;
    background: #87898b;
    color: #fff;
}

.track-icon svg {
    width: 12px;
    height: 10px;
    margin-left: 2px;
}

.track-name {
    margin-left: 6px;
    font-size: 8px;
    letter-spacing: -.45px;
}

.track-end {
    width: 8px;
    height: 11px;
    margin: 0 0 0 auto;
    background: #000;
}

.track-foot {
    display: flex;
    align-items: center;
    gap: 7px;
    margin-top: auto;
    padding: 0 4px 4px 8px;
    color: #85888a;
}

.track-foot .tri {
    border-top: 4px solid #85888a;
}

.track-foot svg {
    width: 8px;
    height: 8px;
}

.splitter {
    display: flex;
    align-items: center;
    width: 3px;
    border-left: 2px solid #6b6e70;
    background: #111;
}

.splitter span {
    width: 2px;
    height: 17px;
    margin-left: -2px;
    background: repeating-linear-gradient(#f2f2f2 0, #f2f2f2 1px, #111 1px, #111 3px);
}

/* Timeline: one cell per two bars */
.timeline {
    position: relative;
    display: flex;
    flex-direction: column;
    width: 584px;
}

.bars {
    display: flex;
    height: 542px;
    padding: 3px 0 0 5px;
    background: linear-gradient(#1a1c1f 19px, #222528 19px, #222528 33px, #393c3e 33px, #393c3e 34px, #25292c 34px);
}

.bar {
    flex: none;
    width: 41.150px;
    border-left: 1px solid #707375;
    font-size: 9px;
    font-weight: 700;
}

.bar span {
    display: block;
    height: 16px;
    margin-left: -1px;
    padding: 4px 0 0 3px;
    border-left: 1px solid #c6c7c8;
    line-height: 14px;
}

.bar.first {
    margin-left: -1px;
    width: 42.150px;
    border-left: 3px solid #7c7f81;
}

.bar.first span {
    border: 0;
}

.bar.last {
    width: 3px;
}

.cursor-head {
    position: absolute;
    top: 3px;
    left: 0;
    width: 12px;
    height: 7px;
}

.h-scroll {
    display: flex;
    align-items: center;
    height: 12px;
    color: #b5b7b8;
}

.h-track {
    display: flex;
    align-items: center;
    width: 513px;
    height: 10px;
    background: #47494b;
}

.chev {
    width: 12px;
    padding-left: 2px;
    background: #35383a;
    line-height: 8px;
    font-size: 11px;
    font-weight: 700;
    color: #fff;
}

.chev.end {
    margin-left: auto;
    padding-left: 5px;
}

.thumb {
    width: 44px;
    height: 6px;
    background: #e6e7e8;
}

.h-scroll .tri,
.v-col .tri {
    margin: 0 8px 0 4px;
    border-top: 3px solid #b5b7b8;
}

.h-zoom {
    width: 32px;
    height: 1px;
    margin: 0 7px 0 3px;
    background: #898b8d;
}

.h-zoom span,
.v-zoom span {
    display: block;
    width: 4px;
    height: 4px;
    border-radius: 50%;
    background: #d6d6d6;
}

.h-zoom span {
    margin: -1.500px 0 0 10px;
}

.v-col {
    display: flex;
    flex-direction: column;
    align-items: center;
    width: 14px;
    padding: 2px 2px 0 0;
}

.v-menu {
    display: flex;
    align-items: center;
    justify-content: center;
    flex: none;
    width: 10px;
    height: 16px;
    border-radius: 2px;
    background: #65686a;
}

.v-menu::after {
    content: "";
    border: 2.500px solid transparent;
    border-top: 4px solid #fff;
    border-bottom: 0;
}

.slash {
    width: 6px;
    height: 1px;
    margin-top: 7px;
    background: #888;
    transform: rotate(-42deg);
}

.v-zoom {
    display: flex;
    width: 1px;
    background: #898b8d;
}

.v-zoom span {
    flex: none;
    margin-left: -1.500px;
}

.v-zoom.top {
    align-items: flex-end;
    height: 33px;
    margin-top: 9px;
}

.v-scroll {
    width: 9px;
    height: 407px;
    margin-top: 4px;
    background: #3d4042;
}

.v-col .tri {
    margin: 5px 0;
}

.v-sign {
    height: 5px;
    line-height: 4px;
}

.v-zoom.low {
    height: 37px;
    padding-top: 4px;
}

.v-sign.plus {
    font-size: 7px;
}

/* Right zone */
.rack {
    display: flex;
    flex-direction: column;
    width: 158px;
    margin-left: 2px;
}

.rack-tabs {
    display: flex;
    height: 17px;
    line-height: 16px;
    font-weight: 600;
}

.rack-tabs span {
    width: 35px;
    text-align: center;
}

.rack-tabs .active {
    position: relative;
    width: 43px;
    margin-bottom: -2px;
    border: 2px solid #f2f2f2;
    border-bottom: 0;
    border-radius: 3px 3px 0 0;
    background: #25292c;
    line-height: 13px;
    font-weight: 700;
}

.rack-tabs span:nth-child(3) {
    width: 29px;
}

.rack-tabs span:last-child {
    width: 51px;
}

.rack-pane {
    flex: 1;
    padding: 3px 4px 0;
    border: 2px solid #f2f2f2;
    border-radius: 5px;
    background: #25292c;
}

.search {
    display: flex;
    height: 15px;
}

.search .field {
    display: flex;
    align-items: center;
    gap: 2px;
    width: 113px;
    padding-left: 3px;
    background: #bfc0c0;
    color: #777a7c;
}

.search svg {
    width: 11px;
    height: 11px;
    color: #111;
}

.search .clear,
.search .as-list {
    display: flex;
    align-items: center;
    justify-content: center;
    width: 14px;
    background: #343739;
}

.search .clear svg {
    width: 8px;
    color: #7d8082;
}

.search .as-list {
    width: 16px;
    margin-left: 2px;
    background: #45484a;
}

.search .as-list svg {
    width: 10px;
    color: #fff;
}

.path {
    display: flex;
    align-items: center;
    height: 20px;
    margin-right: 1px;
    border-bottom: 2px solid #55585a;
}

.path .back {
    width: 13px;
    height: 12px;
    border: 1px solid #505355;
    background: #3a3d3f;
}

.path svg {
    width: 10px;
    height: 10px;
    margin-left: 4px;
    color: #d9dadb;
}

.tiles {
    display: grid;
    grid-template-columns: 74px 74px;
    grid-auto-rows: 85px;
    padding-top: 25px;
    margin-left: -3px;
}

.tile {
    display: flex;
    flex-direction: column;
    align-items: center;
    line-height: 11px;
}

.tile span {
    display: flex;
    align-items: center;
    justify-content: center;
    width: 49px;
    height: 49px;
    margin-bottom: 7px;
    border-radius: 2px;
    background: #a4a7aa;
    color: #25292c;
}

.tile svg {
    width: 48px;
    height: 48px;
}

.tile .fx {
    font: 700 27px "Liberation Sans", Arial, sans-serif;
    letter-spacing: -1px;
}

/* Transport */
.transport {
    flex: 1;
    margin-top: 3px;
    padding: 0 0 1px 2px;
    background: #1f2225;
}

.transport em {
    flex: none;
    width: 2px;
    height: 10px;
    margin: 0 2px;
    background: repeating-linear-gradient(#a5a7a8 0, #a5a7a8 1px, transparent 1px, transparent 3px);
}

.transport .pos {
    flex: 1;
    padding-right: 5px;
    text-align: right;
    line-height: 16px;
    font-size: 10px;
    word-spacing: 2.800px;
}

.t-connect {
    width: 18px;
}

.t-rec {
    width: 30px;
    margin-left: 3px;
}

.transport .dot::before {
    content: "";
    width: 7px;
    height: 7px;
    border-radius: 50%;
    background: #fff;
}

.t-wave,
.t-midi {
    width: 31px;
    margin-left: 1px;
}

.t-midi {
    width: 30px;
    margin-left: 2px;
}

.transport .dark .drop {
    padding: 0 5px 0 0;
}

.t-aq {
    width: 26px;
    margin-left: 1px;
    justify-content: center;
    line-height: 16px;
    font-size: 9.500px;
}

.t-left {
    width: 104px;
    margin-left: 111px;
}

.t-right {
    width: 104px;
    margin-left: 6px;
}

.t-lock {
    width: 53px;
    margin-left: 2px;
}

.buttons {
    display: flex;
    flex: none;
    width: 138px;
    height: 22px;
    border: 2px solid #d5d6d7;
    border-radius: 3px;
    background: #737577;
    color: #fff;
}

.buttons i {
    display: flex;
    align-items: center;
    justify-content: center;
    width: 34px;
}

.buttons svg {
    width: 11px;
    height: 11px;
}

.t-pre {
    width: 27px;
    margin-left: 1px;
    justify-content: center;
}

.group.t-pre {
    color: #858789;
}

.t-time {
    width: 104px;
    margin-left: 2px;
}

.t-time i {
    border-right: 1px solid #46494b;
}

.t-tempo {
    width: 75px;
    margin-left: 1px;
}

.group.t-tempo {
    background: #191a1d;
}

.transport .t-tempo .pos {
    padding-right: 7px;
    font-size: 8.900px;
}

.spin {
    width: 5px;
    height: 12px;
    margin: 2px 5px 0 0;
}

.t-click {
    width: 35px;
    margin-left: 100px;
}

.t-meter {
    width: 61px;
    margin-left: 1px;
}

.t-meter span {
    width: 18px;
    border-right: 1px solid #424547;
}

.t-gear {
    width: 13px;
    margin-left: 2px;
}

.pointer {
    position: absolute;
    left: 1001px;
    top: 556px;
    width: 9px;
    height: 14px;
}

/* Taskbar */
.taskbar {
    display: flex;
    align-items: center;
    height: 27px;
    margin-top: auto;
    background: linear-gradient(90deg, #cfeaf0 0, #cde8ed 45%, #d5e1eb 60%, #e0e5f0 100%);
    color: #222429;
}

.start {
    display: flex;
    justify-content: center;
    width: 33px;
}

.start svg {
    width: 11px;
    height: 11px;
}

.task-search {
    display: flex;
    align-items: center;
    gap: 8px;
    width: 234px;
    height: 26px;
    padding-left: 7px;
    background: #fff;
    font-size: 10px;
    color: #4a4c50;
}

.task-search svg {
    width: 12px;
    height: 12px;
}

.apps {
    display: flex;
    height: 27px;
}

.apps span {
    position: relative;
    display: flex;
    align-items: center;
    justify-content: center;
    width: 33.670px;
}

.apps svg {
    width: 16px;
    height: 16px;
}

.apps .small {
    width: 12px;
    height: 12px;
}

.apps .wide {
    width: 17px;
}

.apps .run::after {
    content: "";
    position: absolute;
    bottom: 0;
    width: 27px;
    height: 2px;
    background: #1672b8;
}

.apps .alert {
    border-bottom: 2px solid #e86f1c;
    background: #f1a56c;
}

.apps .alert b {
    position: absolute;
    right: 7px;
    bottom: 1px;
    padding: 0 2px;
    border-radius: 3px;
    background: #dc2b37;
    line-height: 7px;
    font-size: 6px;
    color: #fff;
}

.apps .current {
    background: #f2f7fa;
}

.apps .current::after {
    width: 33px;
}

.tray {
    display: flex;
    align-items: center;
    margin-left: auto;
    padding-right: 16px;
    font-size: 9px;
}

.weather {
    width: 17px;
    height: 15px;
}

.temp {
    width: 26px;
    margin-left: 5px;
}

.sky {
    width: 49px;
}

.up {
    width: 9px;
    height: 9px;
}

.mic {
    width: 10px;
    height: 12px;
    margin-left: 7px;
}

.net {
    width: 12px;
    height: 12px;
    margin-left: 6px;
}

.vol {
    width: 12px;
    height: 12px;
    margin-left: 4px;
}

.clock {
    width: 42px;
    margin: -2px 10px 0 6px;
    text-align: center;
    line-height: 12px;
    font-size: 8px;
}

.notif {
    width: 12px;
    height: 12px;
}
```
